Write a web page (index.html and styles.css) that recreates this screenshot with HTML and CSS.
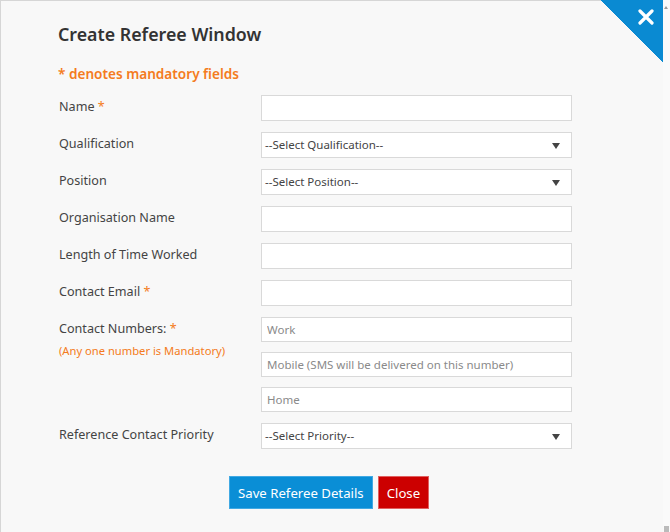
FILE: index.html
```html
<!DOCTYPE html>
<html lang="en">
<head>
    <meta charset="UTF-8">
    <title>Create Referee Window</title>
    <link rel="stylesheet" href="styles.css">
</head>
<body>
    <div class="window">
        <div class="modal">
            <a class="close-corner" href="#">
                <svg width="16" height="16" viewBox="0 0 16 16">
                    <path d="M2 2 L14 14 M14 2 L2 14" stroke="#fff" stroke-width="3.2" stroke-linecap="round"/>
                </svg>
            </a>
            <h2 class="title">Create Referee Window</h2>
            <p class="note">* denotes mandatory fields</p>
            <form class="form">
                <label class="label">Name <span class="req">*</span></label>
                <div class="field"><input type="text"></div>

                <label class="label">Qualification</label>
                <div class="field"><div class="select">--Select Qualification--<span class="caret"></span></div></div>

                <label class="label">Position</label>
                <div class="field"><div class="select">--Select Position--<span class="caret"></span></div></div>

                <label class="label">Organisation Name</label>
                <div class="field"><input type="text"></div>

                <label class="label">Length of Time Worked</label>
                <div class="field"><input type="text"></div>

                <label class="label">Contact Email <span class="req">*</span></label>
                <div class="field"><input type="text"></div>

                <label class="label">Contact Numbers: <span class="req">*</span>
                    <span class="hint">(Any one number is Mandatory)</span>
                </label>
                <div class="field phones">
                    <input type="text" class="small" placeholder="Work">
                    <input type="text" class="small" placeholder="Mobile (SMS will be delivered on this number)">
                    <input type="text" class="small" placeholder="Home">
                </div>

                <label class="label">Reference Contact Priority</label>
                <div class="field"><div class="select">--Select Priority--<span class="caret"></span></div></div>
            </form>
            <div class="actions">
                <button class="btn btn-save">Save Referee Details</button>
                <button class="btn btn-close">Close</button>
            </div>
        </div>
        <div class="scrollbar">
            <span class="arrow-up"></span>
            <span class="thumb"></span>
        </div>
    </div>
</body>
</html>
```

FILE: styles.css
```css
* {
    box-sizing: border-box;
}
body {
    margin: 0;
    font-family: "Noto Sans", "Open Sans", sans-serif;
    color: #444;
    background: #fff;
}
.window {
    display: flex;
    height: 532px;
    overflow: hidden;
}
.modal {
    position: relative;
    width: 663px;
    height: 532px;
    background: #f8f8f8;
    border-left: 1px solid #d6d6d6;
    border-top: 1px solid #d6d6d6;
    padding: 20px 0 0 57px;
}
.close-corner {
    position: absolute;
    top: -1px;
    right: 0;
    width: 62px;
    height: 62px;
    background: linear-gradient(to bottom left, #0a8ad2 50%, transparent 50%);
}
.close-corner svg {
    position: absolute;
    top: 9px;
    right: 9px;
}
.title {
    margin: 0;
    font-size: 17.8px;
    font-weight: 600;
    color: #333;
    line-height: 26px;
}
.note {
    margin: 17px 0 0;
    font-size: 13.6px;
    font-weight: 600;
    color: #f47b20;
    line-height: 20px;
}
.form {
    display: grid;
    grid-template-columns: 203px 311px;
    row-gap: 11px;
    margin-top: 11px;
}
.label {
    font-size: 12.6px;
    line-height: 20px;
    padding-top: 2px;
    padding-left: 1px;
    color: #444;
}
.req {
    color: #f47b20;
}
.hint {
    display: block;
    margin-top: 2px;
    font-size: 11.2px;
    color: #f47b20;
}
.field input,
.select {
    display: block;
    width: 311px;
    height: 26px;
    border: 1px solid #d9d9d9;
    background: #fff;
    font-family: inherit;
    font-size: 11.5px;
    color: #444;
    padding: 0 5px;
    outline: none;
}
.field input::placeholder {
    color: #8a8a8a;
}
.select {
    position: relative;
    line-height: 24px;
    padding-left: 3px;
}
.caret {
    position: absolute;
    right: 11px;
    top: 10px;
    border-left: 4px solid transparent;
    border-right: 4px solid transparent;
    border-top: 6px solid #444;
}
.phones {
    display: flex;
    flex-direction: column;
    gap: 10px;
}
.field input.small {
    height: 25px;
}
.actions {
    display: flex;
    gap: 5px;
    margin: 27px 0 0 171px;
}
.btn {
    height: 33px;
    border: 1px solid transparent;
    color: #fff;
    font-family: inherit;
    font-size: 13.2px;
    padding: 0 8px;
}
.btn-save {
    background: #0a8ed6;
    border-color: #41a9e3;
}
.btn-close {
    background: #cc0000;
    border-color: #e06060;
}
.scrollbar {
    position: relative;
    width: 7px;
    height: 532px;
    background: #fafafa;
}
.arrow-up {
    position: absolute;
    top: 6px;
    left: 1px;
    border-left: 2px solid transparent;
    border-right: 2px solid transparent;
    border-bottom: 3px solid #999;
}
.thumb {
    position: absolute;
    bottom: 0;
    left: 1px;
    width: 5px;
    height: 6px;
    background: #bbb;
}
```
